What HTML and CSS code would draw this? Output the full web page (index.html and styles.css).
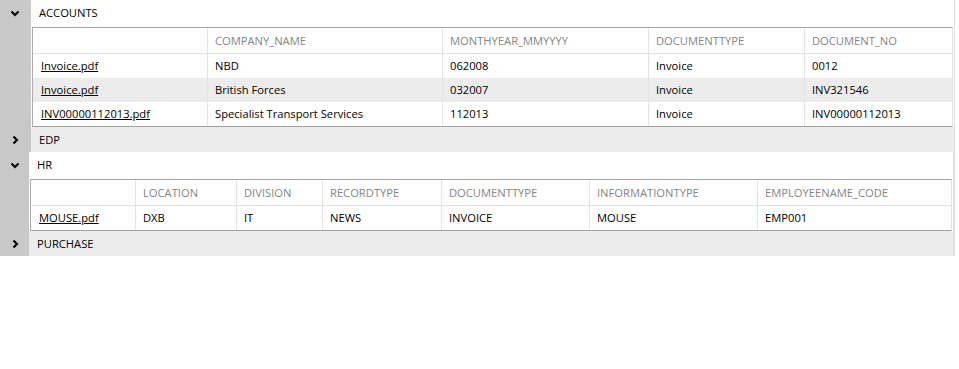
FILE: index.html
```html
<!DOCTYPE html>
<html>
<head>
<meta charset="utf-8">
<link rel="stylesheet" href="styles.css">
</head>
<body>
<div class="grid">
  <section class="group wide">
    <div class="gutter"><svg class="chev" width="10" height="7" viewBox="0 0 10 7"><polyline points="1.5,1.5 5,5 8.5,1.5"/></svg></div>
    <div class="body open">
      <div class="ghead">ACCOUNTS</div>
      <table class="t acc">
        <thead>
          <tr><th></th><th>COMPANY_NAME</th><th>MONTHYEAR_MMYYYY</th><th>DOCUMENTTYPE</th><th>DOCUMENT_NO</th></tr>
        </thead>
        <tbody>
          <tr><td><a href="#">Invoice.pdf</a></td><td>NBD</td><td>062008</td><td>Invoice</td><td>0012</td></tr>
          <tr class="alt"><td><a href="#">Invoice.pdf</a></td><td>British Forces</td><td>032007</td><td>Invoice</td><td>INV321546</td></tr>
          <tr><td><a href="#">INV00000112013.pdf</a></td><td>Specialist Transport Services</td><td>112013</td><td>Invoice</td><td>INV00000112013</td></tr>
        </tbody>
      </table>
    </div>
  </section>
  <section class="group wide">
    <div class="gutter"><svg class="chev" width="7" height="10" viewBox="0 0 7 10"><polyline points="1.5,1.5 5,5 1.5,8.5"/></svg></div>
    <div class="body closed">
      <div class="ghead">EDP</div>
    </div>
  </section>
  <section class="group narrow">
    <div class="gutter"><svg class="chev" width="10" height="7" viewBox="0 0 10 7"><polyline points="1.5,1.5 5,5 8.5,1.5"/></svg></div>
    <div class="body open">
      <div class="ghead">HR</div>
      <table class="t hr">
        <thead>
          <tr><th></th><th>LOCATION</th><th>DIVISION</th><th>RECORDTYPE</th><th>DOCUMENTTYPE</th><th>INFORMATIONTYPE</th><th>EMPLOYEENAME_CODE</th></tr>
        </thead>
        <tbody>
          <tr><td><a href="#">MOUSE.pdf</a></td><td>DXB</td><td>IT</td><td>NEWS</td><td>INVOICE</td><td>MOUSE</td><td>EMP001</td></tr>
        </tbody>
      </table>
    </div>
  </section>
  <section class="group narrow">
    <div class="gutter"><svg class="chev" width="7" height="10" viewBox="0 0 7 10"><polyline points="1.5,1.5 5,5 1.5,8.5"/></svg></div>
    <div class="body closed">
      <div class="ghead">PURCHASE</div>
    </div>
  </section>
</div>
</body>
</html>
```
FILE: styles.css
```css
* { box-sizing: border-box; }
html, body { margin: 0; padding: 0; background: #fff; }
body {
  font-family: "Open Sans", "Noto Sans", sans-serif;
  font-size: 11.2px;
  color: #000;
}
.grid { width: 955px; display: flex; flex-direction: column; }
.group { display: flex; align-items: stretch; }
.gutter {
  background: #c8c8c8;
  display: flex;
  justify-content: center;
  align-items: flex-start;
  flex: none;
}
.wide .gutter { width: 31px; padding-right: 1px; }
.narrow .gutter { width: 29px; padding-left: 1px; }
.chev {
  fill: none;
  stroke: #000;
  stroke-width: 2.1;
  margin-top: 10px;
}
.group .body { flex: 1; border-right: 1px solid #dedede; }
.wide .body { width: 924px; }
.narrow .body { width: 926px; border-right-width: 2px; }
.group:nth-child(2) .chev, .group:nth-child(4) .chev { margin-top: 8px; }
.group:nth-child(3) .chev { margin-top: 10px; }
.body.closed { background: #ececec; }
.body.open { background: #fff; }
.ghead {
  height: 25px;
  line-height: 25px;
  padding-left: 8px;
  color: #000;
}
.body.open .ghead { height: 27px; line-height: 25px; padding-bottom: 2px; }
.t {
  border-collapse: separate;
  border-spacing: 0;
  table-layout: fixed;
  margin-left: 1px;
  border-top: 1px solid #a2a2a2;
  border-bottom: 1px solid #a2a2a2;
  border-left: 1px solid #acacac;
  border-right: 1px solid #e2e2e2;
}
.acc { width: 921px; }
.hr { width: 922px; }
.t th, .t td {
  padding: 0 0 0 7px;
  border-left: 1px solid #e3e3e3;
  text-align: left;
  white-space: nowrap;
  overflow: hidden;
  font-weight: normal;
}
.t th:first-child, .t td:first-child { border-left: none; padding-left: 8px; }
.t th {
  height: 26px;
  color: #858585;
  border-bottom: 1px solid #e3e3e3;
}
.t td { height: 24px; padding-bottom: 2px; }
.t tr.alt td { background: #ececec; }
.t a { color: #000; text-decoration: underline; }

.acc th:nth-child(1) { width: 174px; }
.acc th:nth-child(2) { width: 235px; }
.acc th:nth-child(3) { width: 206px; }
.acc th:nth-child(4) { width: 156px; }
.acc th:nth-child(5) { width: 148px; }

.hr th:nth-child(1) { width: 104px; }
.hr th:nth-child(2) { width: 101px; }
.hr th:nth-child(3) { width: 86px; }
.hr th:nth-child(4) { width: 119px; }
.hr th:nth-child(5) { width: 148px; }
.hr th:nth-child(6) { width: 168px; }
.hr th:nth-child(7) { width: 194px; }
```
